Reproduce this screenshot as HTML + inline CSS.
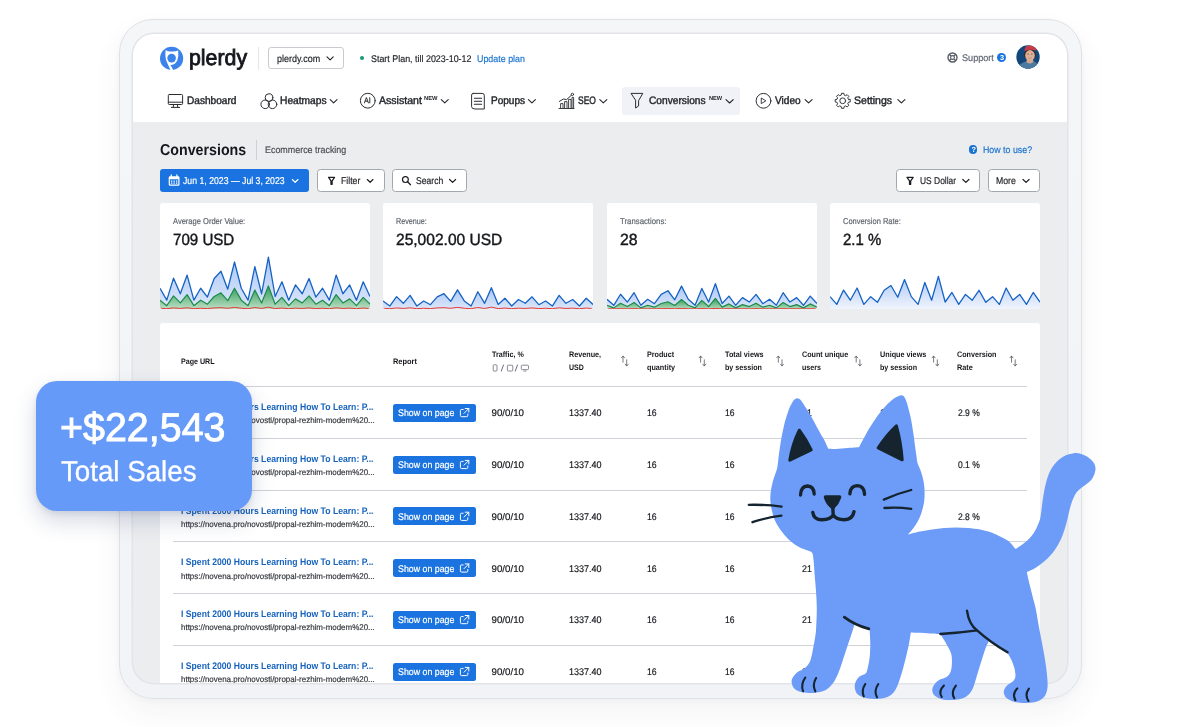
<!DOCTYPE html>
<html lang="en">
<head>
<meta charset="utf-8">
<title>Plerdy Conversions</title>
<style>
*{box-sizing:border-box;margin:0;padding:0}
html,body{width:1200px;height:727px;overflow:hidden;background:#fff}
body{position:relative;font-family:"Liberation Sans",sans-serif;color:#1b1d21;-webkit-font-smoothing:antialiased;text-rendering:geometricPrecision}
#root{position:absolute;left:0;top:0;width:1200px;height:727px;overflow:hidden;background:#fff;will-change:transform}
.abs{position:absolute;white-space:nowrap}
#frame{position:absolute;left:119px;top:19px;width:963px;height:680px;border-radius:34px;background:linear-gradient(#f5f6f8,#f2f3f6);border:1px solid #dee1e5;box-shadow:0 14px 30px rgba(60,70,90,.06),0 2px 6px rgba(60,70,90,.04)}
#screen{position:absolute;left:133px;top:34px;width:934px;height:649px;border-radius:21px;background:#ebedef;overflow:hidden;box-shadow:0 0 0 1.5px #e2e4e8}
#pg{position:absolute;left:-133px;top:-34px;width:1200px;height:727px}
#hdr{position:absolute;left:133px;top:34px;width:934px;height:87.5px;background:#fff}
.t{position:absolute;white-space:nowrap;line-height:1;transform-origin:0 50%}
.card{position:absolute;top:203px;width:210px;height:106px;background:#fff;border-radius:3px;overflow:hidden}
.card svg{position:absolute;left:0;top:0}
#tbl{position:absolute;left:160px;top:323px;width:880px;height:380px;background:#fff;border-radius:3px}
.sep{position:absolute;left:173px;width:854px;height:1px;background:#cfd2d6}
#sales{position:absolute;left:36px;top:381px;width:216px;height:130px;border-radius:21px;background:#669af9;box-shadow:0 10px 22px rgba(40,60,110,.2),0 2px 5px rgba(40,60,110,.1);color:#fff}
</style>
</head>
<body>
<div id="root">
<div id="frame"></div>
<div id="screen"><div id="pg">
<div id="hdr"></div>
<svg class="abs" style="left:158px;top:45px" width="27" height="27" viewBox="158 45 27 27">
<circle cx="171.6" cy="58.4" r="11.6" fill="#3b82ea"/>
<path d="M165.7 49.9 Q168.2 52 171.7 51.5 Q175.4 51.7 178.2 50.4 Q178.9 56 177.3 60.6 Q175.2 64.8 171.4 64.9 Q170.8 64.9 170.3 64.7 L173.4 70.2 L170.5 70.2 L166.7 61.8 Q164.6 56.4 165.7 49.9 Z" fill="#fff"/>
<circle cx="171.6" cy="58.1" r="4.3" fill="#3b82ea"/>
</svg>
<span class="t" style="left:189.10px;top:47px;font-size:22.2px;color:#15171c;transform:scaleX(0.9609);-webkit-text-stroke:.85px #15171c;">plerdy</span>
<div class="abs" style="left:258px;top:47px;width:1px;height:22.5px;background:#e4e6e9"></div>
<div class="abs" style="left:268.3px;top:47.2px;width:76.2px;height:22.2px;border:1px solid #c8ccd1;border-radius:3px;background:#fff"></div>
<span class="t" style="left:276.80px;top:55px;font-size:9.9px;color:#1d1f23;transform:scaleX(0.9060);-webkit-text-stroke:.18px #1d1f23;">plerdy.com</span>
<svg class="abs" style="left:0;top:0" width="1200" height="727"><path d="M327.00 56.93 L330.10 59.87 L333.20 56.93" fill="none" stroke="#1d1f23" stroke-width="1.1" stroke-linecap="round" stroke-linejoin="round"/></svg>
<div class="abs" style="left:360.3px;top:56.4px;width:3.8px;height:3.8px;border-radius:50%;background:#189b78"></div>
<span class="t" style="left:370.60px;top:55px;font-size:9.7px;color:#1d1f23;transform:scaleX(0.9191);-webkit-text-stroke:.18px #1d1f23;">Start Plan, till 2023-10-12</span>
<span class="t" style="left:477.30px;top:55px;font-size:9.7px;color:#1a73d0;transform:scaleX(0.9176);-webkit-text-stroke:.18px #1a73d0;">Update plan</span>
<svg class="abs" style="left:946px;top:51px" width="13" height="13" viewBox="-6.5 -6.5 13 13">
<circle r="4.5" fill="none" stroke="#555a63" stroke-width="1.4"/><circle r="1.9" fill="none" stroke="#555a63" stroke-width="1.1"/>
<path d="M-3.3 -3.3 L-1.4 -1.4 M3.3 -3.3 L1.4 -1.4 M-3.3 3.3 L-1.4 1.4 M3.3 3.3 L1.4 1.4" stroke="#555a63" stroke-width="1.4"/></svg>
<span class="t" style="left:961.70px;top:54px;font-size:9.7px;color:#5f6570;transform:scaleX(0.9390);-webkit-text-stroke:.18px #5f6570;">Support</span>
<div class="abs" style="left:996.9px;top:52.7px;width:9.6px;height:9.6px;border-radius:50%;background:#1a73e0"></div>
<span class="t" style="left:999.90px;top:54px;font-size:7.3px;color:#fff;font-weight:bold;">3</span>
<svg class="abs" style="left:1016.3px;top:45.4px" width="24" height="24" viewBox="-12 -12 24 24">
<defs><clipPath id="av"><circle r="11.7"/></clipPath></defs>
<g clip-path="url(#av)"><rect x="-12" y="-12" width="24" height="24" fill="#134679"/>
<path d="M-11 12 Q-9 6.2 -2.4 4.4 L6 4.2 Q10.4 6 11.4 12 Z" fill="#4a7a9f"/>
<path d="M-0.8 0.6 L-1.6 5 Q2 8.2 5.4 5 L4.8 0.6 Z" fill="#d2a58b"/>
<ellipse cx="1.9" cy="-2.4" rx="5.9" ry="5.6" fill="#3b2a23"/>
<ellipse cx="2" cy="-1.6" rx="4.8" ry="5.3" fill="#dbb097"/>
<path d="M-3.6 -5.8 Q-3.4 -12 2.6 -12 Q8.2 -12 8.6 -6.2 Q2.6 -8.4 -3.6 -5.8 Z" fill="#c93c47"/>
<ellipse cx="0.1" cy="-3" rx=".8" ry=".5" fill="#6a4a3c"/><ellipse cx="3.8" cy="-3" rx=".8" ry=".5" fill="#6a4a3c"/>
<path d="M0.2 0.8 Q2 2 3.8 0.8" stroke="#b07d68" stroke-width=".6" fill="none"/>
</g></svg>
<div class="abs" style="left:622.2px;top:87px;width:117.8px;height:27.6px;border-radius:3px;background:#f0f2f7"></div>
<svg class="abs" style="left:0;top:0" width="1200" height="727" fill="none" stroke="#2b2d33" stroke-width="1" stroke-linecap="round" stroke-linejoin="round"><rect x="168.3" y="94.5" width="14.3" height="10" rx="1"/><path d="M168.3 102.2 H182.6 M173.6 104.6 L173.2 107.3 M177.4 104.6 L177.8 107.3 M171.4 107.4 H179.6"/></svg>
<span class="t" style="left:186.80px;top:96px;font-size:10.9px;color:#24262b;transform:scaleX(0.9283);-webkit-text-stroke:.42px #24262b;">Dashboard</span>
<svg class="abs" style="left:0;top:0" width="1200" height="727" fill="none" stroke="#2b2d33" stroke-width="1" stroke-linecap="round" stroke-linejoin="round"><circle cx="269" cy="97.6" r="3.85"/><circle cx="265.2" cy="104.3" r="4.3"/><circle cx="272.5" cy="104.3" r="4.3"/></svg>
<span class="t" style="left:279.60px;top:96px;font-size:10.9px;color:#24262b;transform:scaleX(0.9380);-webkit-text-stroke:.42px #24262b;">Heatmaps</span>
<svg class="abs" style="left:0;top:0" width="1200" height="727"><path d="M330.20 99.68 L333.60 102.92 L337.00 99.68" fill="none" stroke="#24262b" stroke-width="1.1" stroke-linecap="round" stroke-linejoin="round"/></svg>
<svg class="abs" style="left:0;top:0" width="1200" height="727" fill="none" stroke="#2b2d33" stroke-width="1" stroke-linecap="round" stroke-linejoin="round"><circle cx="367.8" cy="100.7" r="7.4"/></svg>
<span class="t" style="left:364.40px;top:97px;font-size:8.0px;color:#24262b;transform:scaleX(0.8996);-webkit-text-stroke:.25px #24262b;">AI</span>
<span class="t" style="left:379.30px;top:96px;font-size:10.9px;color:#24262b;transform:scaleX(0.9701);-webkit-text-stroke:.42px #24262b;">Assistant</span>
<span class="t" style="left:424.30px;top:97px;font-size:5.8px;color:#24262b;transform:scaleX(0.9977);font-weight:bold;">NEW</span>
<svg class="abs" style="left:0;top:0" width="1200" height="727"><path d="M441.30 99.66 L444.75 102.94 L448.20 99.66" fill="none" stroke="#24262b" stroke-width="1.1" stroke-linecap="round" stroke-linejoin="round"/></svg>
<svg class="abs" style="left:0;top:0" width="1200" height="727" fill="none" stroke="#2b2d33" stroke-width="1" stroke-linecap="round" stroke-linejoin="round"><path d="M473.2 93.4 H482.2 Q484.3 93.4 484.3 95.4 V109 H475 Q471.6 109 471.6 106.6 V95 Q471.6 93.4 473.2 93.4 Z"/><path d="M474.4 98.2 H481.6 M474.4 101.2 H481.6 M474.4 104.2 H481.6" stroke-width="1.1"/></svg>
<span class="t" style="left:490.60px;top:96px;font-size:10.9px;color:#24262b;transform:scaleX(0.9224);-webkit-text-stroke:.42px #24262b;">Popups</span>
<svg class="abs" style="left:0;top:0" width="1200" height="727"><path d="M528.40 99.64 L531.90 102.96 L535.40 99.64" fill="none" stroke="#24262b" stroke-width="1.1" stroke-linecap="round" stroke-linejoin="round"/></svg>
<svg class="abs" style="left:0;top:0" width="1200" height="727" fill="none" stroke="#2b2d33" stroke-width="1" stroke-linecap="round" stroke-linejoin="round"><path d="M559 108.5 H574 M560.6 108.3 V103.6 H563 V108.3 M564.6 108.3 V101.6 H567 V108.3 M568.6 108.3 V99.4 H571 V108.3 M572 108.3 V97.4 H573.6 V108.3" stroke-width=".9"/><path d="M559.4 101.4 L563.4 99 L566.6 99.6 L571.4 95.2" stroke-width="1"/><circle cx="572.4" cy="94.4" r="1.2" stroke-width=".9"/></svg>
<span class="t" style="left:577.90px;top:96px;font-size:10.9px;color:#24262b;transform:scaleX(0.7776);-webkit-text-stroke:.42px #24262b;">SEO</span>
<svg class="abs" style="left:0;top:0" width="1200" height="727"><path d="M599.80 99.64 L603.30 102.96 L606.80 99.64" fill="none" stroke="#24262b" stroke-width="1.1" stroke-linecap="round" stroke-linejoin="round"/></svg>
<svg class="abs" style="left:0;top:0" width="1200" height="727" fill="none" stroke="#2b2d33" stroke-width="1" stroke-linecap="round" stroke-linejoin="round"><path d="M631.4 93.4 H642.8 L638.6 100.6 V106 L635.6 108 V100.6 Z"/></svg>
<span class="t" style="left:648.90px;top:96px;font-size:10.9px;color:#24262b;transform:scaleX(0.9342);-webkit-text-stroke:.42px #24262b;">Conversions</span>
<span class="t" style="left:708.80px;top:97px;font-size:5.8px;color:#24262b;transform:scaleX(0.9755);font-weight:bold;">NEW</span>
<svg class="abs" style="left:0;top:0" width="1200" height="727"><path d="M726.00 99.59 L729.60 103.01 L733.20 99.59" fill="none" stroke="#24262b" stroke-width="1.1" stroke-linecap="round" stroke-linejoin="round"/></svg>
<svg class="abs" style="left:0;top:0" width="1200" height="727" fill="none" stroke="#2b2d33" stroke-width="1" stroke-linecap="round" stroke-linejoin="round"><circle cx="763.5" cy="100.8" r="7.4"/><path d="M761.6 98.2 L765.8 100.8 L761.6 103.4 Z" stroke-width=".9"/></svg>
<span class="t" style="left:775.10px;top:96px;font-size:10.9px;color:#24262b;transform:scaleX(0.9284);-webkit-text-stroke:.42px #24262b;">Video</span>
<svg class="abs" style="left:0;top:0" width="1200" height="727"><path d="M805.10 99.64 L808.60 102.96 L812.10 99.64" fill="none" stroke="#24262b" stroke-width="1.1" stroke-linecap="round" stroke-linejoin="round"/></svg>
<svg class="abs" style="left:0;top:0" width="1200" height="727" fill="none" stroke="#2b2d33" stroke-width="1" stroke-linecap="round" stroke-linejoin="round"><path d="M850.21 99.61 L850.21 101.99 L848.41 102.27 L847.78 103.80 L848.85 105.27 L847.17 106.95 L845.70 105.88 L844.17 106.51 L843.89 108.31 L841.51 108.31 L841.23 106.51 L839.70 105.88 L838.23 106.95 L836.55 105.27 L837.62 103.80 L836.99 102.27 L835.19 101.99 L835.19 99.61 L836.99 99.33 L837.62 97.80 L836.55 96.33 L838.23 94.65 L839.70 95.72 L841.23 95.09 L841.51 93.29 L843.89 93.29 L844.17 95.09 L845.70 95.72 L847.17 94.65 L848.85 96.33 L847.78 97.80 L848.41 99.33 Z" stroke-width=".95"/><circle cx="842.7" cy="100.8" r="2.9" stroke-width=".95"/></svg>
<span class="t" style="left:853.90px;top:96px;font-size:10.9px;color:#24262b;transform:scaleX(0.9674);-webkit-text-stroke:.42px #24262b;">Settings</span>
<svg class="abs" style="left:0;top:0" width="1200" height="727"><path d="M897.90 99.64 L901.40 102.96 L904.90 99.64" fill="none" stroke="#24262b" stroke-width="1.1" stroke-linecap="round" stroke-linejoin="round"/></svg>
<span class="t" style="left:160.40px;top:143px;font-size:15.7px;color:#15171c;transform:scaleX(0.9075);font-weight:bold;">Conversions</span>
<div class="abs" style="left:255.5px;top:139.7px;width:1px;height:20px;background:#cdd0d4"></div>
<span class="t" style="left:264.50px;top:146px;font-size:9.6px;color:#4a4e55;transform:scaleX(0.9292);-webkit-text-stroke:.18px #4a4e55;">Ecommerce tracking</span>
<div class="abs" style="left:969.1px;top:145.3px;width:8.4px;height:8.4px;border-radius:50%;background:#1a73d0"></div>
<span class="t" style="left:971.50px;top:146px;font-size:7.3px;color:#fff;font-weight:bold;">?</span>
<span class="t" style="left:982.90px;top:146px;font-size:9.6px;color:#1a73d0;transform:scaleX(0.9201);-webkit-text-stroke:.18px #1a73d0;">How to use?</span>
<div class="abs" style="left:160px;top:168.8px;width:149.2px;height:23.2px;border-radius:3px;background:#1a73e0"></div>
<svg class="abs" style="left:0;top:0" width="1200" height="727"><path d="M170 176.2 H178.2 Q179.5 176.2 179.5 177.5 V184.5 Q179.5 185.8 178.2 185.8 H170 Q168.7 185.8 168.7 184.5 V177.5 Q168.7 176.2 170 176.2 Z M169.9 179.2 V184.1 Q169.9 184.6 170.4 184.6 H177.8 Q178.3 184.6 178.3 184.1 V179.2 Z" fill="#fff" fill-rule="evenodd"/><path d="M171.3 175 V177 M176.9 175 V177" stroke="#fff" stroke-width="1.3" stroke-linecap="round"/><path d="M171 180.6 h1.3 v1.1 h-1.3z M173.5 180.6 h1.3 v1.1 h-1.3z M176 180.6 h1.3 v1.1 h-1.3z M171 182.6 h1.3 v1.1 h-1.3z M173.5 182.6 h1.3 v1.1 h-1.3z M176 182.6 h1.3 v1.1 h-1.3z" fill="#fff"/></svg>
<span class="t" style="left:183.40px;top:177px;font-size:9.9px;color:#fff;transform:scaleX(0.8816);-webkit-text-stroke:.18px #fff;">Jun 1, 2023 — Jul 3, 2023</span>
<svg class="abs" style="left:0;top:0" width="1200" height="727"><path d="M292.30 179.55 L295.15 182.25 L298.00 179.55" fill="none" stroke="#fff" stroke-width="1.2" stroke-linecap="round" stroke-linejoin="round"/></svg>
<div class="abs" style="left:317.2px;top:168.8px;width:67.5px;height:23.2px;border-radius:3.5px;background:#fff;border:1px solid #a3a8ae"></div>
<svg class="abs" style="left:0;top:0" width="1200" height="727"><path d="M328.60 177.30 H334.50 L332.15 180.90 V184.30 H330.95 V180.90 Z" fill="none" stroke="#1d1f23" stroke-width="1.25" stroke-linejoin="round"/></svg>
<span class="t" style="left:340.90px;top:177px;font-size:9.9px;color:#1d1f23;transform:scaleX(0.8818);-webkit-text-stroke:.18px #1d1f23;">Filter</span>
<svg class="abs" style="left:0;top:0" width="1200" height="727"><path d="M367.30 179.55 L370.15 182.25 L373.00 179.55" fill="none" stroke="#1d1f23" stroke-width="1.2" stroke-linecap="round" stroke-linejoin="round"/></svg>
<div class="abs" style="left:392.2px;top:168.8px;width:74.5px;height:23.2px;border-radius:3.5px;background:#fff;border:1px solid #a3a8ae"></div>
<svg class="abs" style="left:0;top:0" width="1200" height="727"><circle cx="405.4" cy="179.6" r="2.9" fill="none" stroke="#1d1f23" stroke-width="1.2"/><path d="M407.6 181.8 L410.5 184.7" stroke="#1d1f23" stroke-width="1.3" stroke-linecap="round"/></svg>
<span class="t" style="left:415.90px;top:177px;font-size:9.9px;color:#1d1f23;transform:scaleX(0.8735);-webkit-text-stroke:.18px #1d1f23;">Search</span>
<svg class="abs" style="left:0;top:0" width="1200" height="727"><path d="M449.60 179.47 L452.60 182.33 L455.60 179.47" fill="none" stroke="#1d1f23" stroke-width="1.2" stroke-linecap="round" stroke-linejoin="round"/></svg>
<div class="abs" style="left:896.2px;top:168.8px;width:83.5px;height:23.2px;border-radius:3.5px;background:#fff;border:1px solid #a3a8ae"></div>
<svg class="abs" style="left:0;top:0" width="1200" height="727"><path d="M907.00 177.30 H913.20 L910.70 180.90 V184.30 H909.50 V180.90 Z" fill="none" stroke="#1d1f23" stroke-width="1.25" stroke-linejoin="round"/></svg>
<span class="t" style="left:919.60px;top:177px;font-size:9.9px;color:#1d1f23;transform:scaleX(0.8546);-webkit-text-stroke:.18px #1d1f23;">US Dollar</span>
<svg class="abs" style="left:0;top:0" width="1200" height="727"><path d="M962.80 179.45 L965.85 182.35 L968.90 179.45" fill="none" stroke="#1d1f23" stroke-width="1.2" stroke-linecap="round" stroke-linejoin="round"/></svg>
<div class="abs" style="left:987.5px;top:168.8px;width:52.2px;height:23.2px;border-radius:3.5px;background:#fff;border:1px solid #a3a8ae"></div>
<span class="t" style="left:995.90px;top:177px;font-size:9.9px;color:#1d1f23;transform:scaleX(0.8823);-webkit-text-stroke:.18px #1d1f23;">More</span>
<svg class="abs" style="left:0;top:0" width="1200" height="727"><path d="M1023.00 179.45 L1026.05 182.35 L1029.10 179.45" fill="none" stroke="#1d1f23" stroke-width="1.2" stroke-linecap="round" stroke-linejoin="round"/></svg>
<div class="card" style="left:160px"><svg width="210" height="107" viewBox="0 0 210 107"><defs><linearGradient id="gb1" x1="0" y1="0" x2="0" y2="1"><stop offset="0" stop-color="#a9c6f5"/><stop offset="1" stop-color="#dfe9fa"/></linearGradient><linearGradient id="gg1" x1="0" y1="0" x2="0" y2="1"><stop offset="0" stop-color="#2f9a55"/><stop offset="1" stop-color="#c4e3cd"/></linearGradient></defs><path d="M0.00 85.25 L6.77 97.17 L13.55 75.17 L20.32 90.75 L27.10 72.05 L33.87 97.17 L40.65 85.25 L47.42 94.05 L54.19 75.53 L60.97 68.20 L67.74 86.17 L74.52 59.03 L81.29 85.25 L88.06 97.17 L94.84 63.62 L101.61 90.75 L108.39 54.08 L115.16 93.50 L121.94 78.83 L128.71 97.17 L135.48 81.95 L142.26 90.75 L149.03 75.53 L155.81 94.05 L162.58 85.25 L169.35 97.17 L176.13 72.05 L182.90 90.75 L189.68 81.95 L196.45 97.17 L203.23 78.83 L210.00 93.50 L210 107.5 L0 107.5 Z" fill="url(#gb1)"/><path d="M0.00 97.17 L6.77 102.67 L13.55 92.95 L20.32 99.92 L27.10 91.67 L33.87 102.67 L40.65 97.17 L47.42 101.20 L54.19 93.50 L60.97 89.83 L67.74 97.72 L74.52 85.25 L81.29 97.17 L88.06 102.67 L94.84 87.08 L101.61 99.92 L108.39 82.87 L115.16 101.20 L121.94 94.42 L128.71 102.67 L135.48 95.88 L142.26 99.92 L149.03 92.95 L155.81 101.20 L162.58 97.17 L169.35 102.67 L176.13 91.67 L182.90 99.92 L189.68 95.88 L196.45 102.67 L203.23 94.42 L210.00 101.20 L210 107.5 L0 107.5 Z" fill="url(#gg1)"/><path d="M0.00 85.25 L6.77 97.17 L13.55 75.17 L20.32 90.75 L27.10 72.05 L33.87 97.17 L40.65 85.25 L47.42 94.05 L54.19 75.53 L60.97 68.20 L67.74 86.17 L74.52 59.03 L81.29 85.25 L88.06 97.17 L94.84 63.62 L101.61 90.75 L108.39 54.08 L115.16 93.50 L121.94 78.83 L128.71 97.17 L135.48 81.95 L142.26 90.75 L149.03 75.53 L155.81 94.05 L162.58 85.25 L169.35 97.17 L176.13 72.05 L182.90 90.75 L189.68 81.95 L196.45 97.17 L203.23 78.83 L210.00 93.50" fill="none" stroke="#1662c4" stroke-width="1.3" stroke-linejoin="round"/><path d="M0.00 97.17 L6.77 102.67 L13.55 92.95 L20.32 99.92 L27.10 91.67 L33.87 102.67 L40.65 97.17 L47.42 101.20 L54.19 93.50 L60.97 89.83 L67.74 97.72 L74.52 85.25 L81.29 97.17 L88.06 102.67 L94.84 87.08 L101.61 99.92 L108.39 82.87 L115.16 101.20 L121.94 94.42 L128.71 102.67 L135.48 95.88 L142.26 99.92 L149.03 92.95 L155.81 101.20 L162.58 97.17 L169.35 102.67 L176.13 91.67 L182.90 99.92 L189.68 95.88 L196.45 102.67 L203.23 94.42 L210.00 101.20" fill="none" stroke="#1c8a4c" stroke-width="1.2" stroke-linejoin="round"/><path d="M0.00 105.26 L6.77 105.68 L13.55 104.91 L20.32 105.45 L27.10 104.80 L33.87 105.68 L40.65 105.26 L47.42 105.57 L54.19 104.92 L60.97 104.66 L67.74 105.29 L74.52 104.34 L81.29 105.26 L88.06 105.68 L94.84 104.50 L101.61 105.45 L108.39 104.17 L115.16 105.55 L121.94 105.04 L128.71 105.68 L135.48 105.15 L142.26 105.45 L149.03 104.92 L155.81 105.57 L162.58 105.26 L169.35 105.68 L176.13 104.80 L182.90 105.45 L189.68 105.15 L196.45 105.68 L203.23 105.04 L210.00 105.55" fill="none" stroke="#e53a36" stroke-width="1" stroke-linejoin="round"/></svg><span class="t" style="left:13.00px;top:14px;font-size:8.5px;color:#5d636c;transform:scaleX(0.8867);-webkit-text-stroke:.18px #5d636c;">Average Order Value:</span><span class="t" style="left:13.00px;top:29px;font-size:16.2px;color:#15171a;transform:scaleX(0.9325);-webkit-text-stroke:.4px #15171a;">709 USD</span></div>
<div class="card" style="left:383.3px"><svg width="210" height="107" viewBox="0 0 210 107"><defs><linearGradient id="gb2" x1="0" y1="0" x2="0" y2="1"><stop offset="0" stop-color="#a9c6f5"/><stop offset="1" stop-color="#dfe9fa"/></linearGradient><linearGradient id="gg2" x1="0" y1="0" x2="0" y2="1"><stop offset="0" stop-color="#2f9a55"/><stop offset="1" stop-color="#c4e3cd"/></linearGradient></defs><path d="M0.00 97.95 L6.77 103.03 L13.55 93.66 L20.32 100.30 L27.10 92.34 L33.87 103.03 L40.65 97.95 L47.42 101.70 L54.19 93.82 L60.97 90.70 L67.74 98.34 L74.52 86.80 L81.29 97.95 L88.06 103.03 L94.84 88.75 L101.61 100.30 L108.39 84.69 L115.16 101.47 L121.94 95.22 L128.71 103.03 L135.48 96.55 L142.26 100.30 L149.03 93.82 L155.81 101.70 L162.58 97.95 L169.35 103.03 L176.13 92.34 L182.90 100.30 L189.68 96.55 L196.45 103.03 L203.23 95.22 L210.00 101.47 L210 107.5 L0 107.5 Z" fill="url(#gb2)"/><path d="M0.00 97.95 L6.77 103.03 L13.55 93.66 L20.32 100.30 L27.10 92.34 L33.87 103.03 L40.65 97.95 L47.42 101.70 L54.19 93.82 L60.97 90.70 L67.74 98.34 L74.52 86.80 L81.29 97.95 L88.06 103.03 L94.84 88.75 L101.61 100.30 L108.39 84.69 L115.16 101.47 L121.94 95.22 L128.71 103.03 L135.48 96.55 L142.26 100.30 L149.03 93.82 L155.81 101.70 L162.58 97.95 L169.35 103.03 L176.13 92.34 L182.90 100.30 L189.68 96.55 L196.45 103.03 L203.23 95.22 L210.00 101.47" fill="none" stroke="#1662c4" stroke-width="1.3" stroke-linejoin="round"/><path d="M0.00 105.26 L6.77 105.68 L13.55 104.91 L20.32 105.45 L27.10 104.80 L33.87 105.68 L40.65 105.26 L47.42 105.57 L54.19 104.92 L60.97 104.66 L67.74 105.29 L74.52 104.34 L81.29 105.26 L88.06 105.68 L94.84 104.50 L101.61 105.45 L108.39 104.17 L115.16 105.55 L121.94 105.04 L128.71 105.68 L135.48 105.15 L142.26 105.45 L149.03 104.92 L155.81 105.57 L162.58 105.26 L169.35 105.68 L176.13 104.80 L182.90 105.45 L189.68 105.15 L196.45 105.68 L203.23 105.04 L210.00 105.55" fill="none" stroke="#e53a36" stroke-width="1" stroke-linejoin="round"/></svg><span class="t" style="left:13.00px;top:14px;font-size:8.5px;color:#5d636c;transform:scaleX(0.8465);-webkit-text-stroke:.18px #5d636c;">Revenue:</span><span class="t" style="left:13.00px;top:29px;font-size:16.2px;color:#15171a;transform:scaleX(0.9605);-webkit-text-stroke:.4px #15171a;">25,002.00 USD</span></div>
<div class="card" style="left:606.6px"><svg width="210" height="107" viewBox="0 0 210 107"><defs><linearGradient id="gb3" x1="0" y1="0" x2="0" y2="1"><stop offset="0" stop-color="#a9c6f5"/><stop offset="1" stop-color="#dfe9fa"/></linearGradient><linearGradient id="gg3" x1="0" y1="0" x2="0" y2="1"><stop offset="0" stop-color="#2f9a55"/><stop offset="1" stop-color="#c4e3cd"/></linearGradient></defs><path d="M0.00 96.32 L6.77 102.30 L13.55 91.26 L20.32 99.08 L27.10 89.69 L33.87 102.30 L40.65 96.32 L47.42 100.74 L54.19 91.44 L60.97 87.76 L67.74 96.78 L74.52 83.16 L81.29 96.32 L88.06 102.30 L94.84 85.46 L101.61 99.08 L108.39 80.67 L115.16 100.46 L121.94 93.10 L128.71 102.30 L135.48 94.66 L142.26 99.08 L149.03 91.44 L155.81 100.74 L162.58 96.32 L169.35 102.30 L176.13 89.69 L182.90 99.08 L189.68 94.66 L196.45 102.30 L203.23 93.10 L210.00 100.46 L210 107.5 L0 107.5 Z" fill="url(#gb3)"/><path d="M0.00 102.23 L6.77 104.87 L13.55 100.20 L20.32 103.55 L27.10 99.59 L33.87 104.87 L40.65 102.23 L47.42 104.16 L54.19 100.47 L60.97 98.71 L67.74 102.49 L74.52 96.51 L81.29 102.23 L88.06 104.87 L94.84 97.39 L101.61 103.55 L108.39 95.36 L115.16 104.16 L121.94 100.91 L128.71 104.87 L135.48 101.61 L142.26 103.55 L149.03 100.20 L155.81 104.16 L162.58 102.23 L169.35 104.87 L176.13 99.59 L182.90 103.55 L189.68 101.61 L196.45 104.87 L203.23 100.91 L210.00 104.16 L210 107.5 L0 107.5 Z" fill="url(#gg3)"/><path d="M0.00 96.32 L6.77 102.30 L13.55 91.26 L20.32 99.08 L27.10 89.69 L33.87 102.30 L40.65 96.32 L47.42 100.74 L54.19 91.44 L60.97 87.76 L67.74 96.78 L74.52 83.16 L81.29 96.32 L88.06 102.30 L94.84 85.46 L101.61 99.08 L108.39 80.67 L115.16 100.46 L121.94 93.10 L128.71 102.30 L135.48 94.66 L142.26 99.08 L149.03 91.44 L155.81 100.74 L162.58 96.32 L169.35 102.30 L176.13 89.69 L182.90 99.08 L189.68 94.66 L196.45 102.30 L203.23 93.10 L210.00 100.46" fill="none" stroke="#1662c4" stroke-width="1.3" stroke-linejoin="round"/><path d="M0.00 102.23 L6.77 104.87 L13.55 100.20 L20.32 103.55 L27.10 99.59 L33.87 104.87 L40.65 102.23 L47.42 104.16 L54.19 100.47 L60.97 98.71 L67.74 102.49 L74.52 96.51 L81.29 102.23 L88.06 104.87 L94.84 97.39 L101.61 103.55 L108.39 95.36 L115.16 104.16 L121.94 100.91 L128.71 104.87 L135.48 101.61 L142.26 103.55 L149.03 100.20 L155.81 104.16 L162.58 102.23 L169.35 104.87 L176.13 99.59 L182.90 103.55 L189.68 101.61 L196.45 104.87 L203.23 100.91 L210.00 104.16" fill="none" stroke="#1c8a4c" stroke-width="1.2" stroke-linejoin="round"/><path d="M0.00 105.77 L6.77 105.89 L13.55 105.67 L20.32 105.82 L27.10 105.63 L33.87 105.89 L40.65 105.77 L47.42 105.85 L54.19 105.67 L60.97 105.60 L67.74 105.78 L74.52 105.50 L81.29 105.77 L88.06 105.89 L94.84 105.55 L101.61 105.82 L108.39 105.45 L115.16 105.85 L121.94 105.70 L128.71 105.89 L135.48 105.73 L142.26 105.82 L149.03 105.67 L155.81 105.85 L162.58 105.77 L169.35 105.89 L176.13 105.63 L182.90 105.82 L189.68 105.73 L196.45 105.89 L203.23 105.70 L210.00 105.85" fill="none" stroke="#e53a36" stroke-width="1" stroke-linejoin="round"/></svg><span class="t" style="left:13.00px;top:14px;font-size:8.5px;color:#5d636c;transform:scaleX(0.9171);-webkit-text-stroke:.18px #5d636c;">Transactions:</span><span class="t" style="left:13.00px;top:29px;font-size:16.2px;color:#15171a;transform:scaleX(0.9767);-webkit-text-stroke:.4px #15171a;">28</span></div>
<div class="card" style="left:829.8px"><svg width="210" height="107" viewBox="0 0 210 107"><defs><linearGradient id="gb4" x1="0" y1="0" x2="0" y2="1"><stop offset="0" stop-color="#a9c6f5"/><stop offset="1" stop-color="#f4f7fd"/></linearGradient><linearGradient id="gg4" x1="0" y1="0" x2="0" y2="1"><stop offset="0" stop-color="#2f9a55"/><stop offset="1" stop-color="#c4e3cd"/></linearGradient></defs><path d="M0.00 93.63 L6.77 101.39 L13.55 87.06 L20.32 97.21 L27.10 85.03 L33.87 101.39 L40.65 93.63 L47.42 99.36 L54.19 87.30 L60.97 82.53 L67.74 94.22 L74.52 76.56 L81.29 93.63 L88.06 101.39 L94.84 79.54 L101.61 97.21 L108.39 73.34 L115.16 99.00 L121.94 89.45 L128.71 101.39 L135.48 91.48 L142.26 97.21 L149.03 87.30 L155.81 99.36 L162.58 93.63 L169.35 101.39 L176.13 85.03 L182.90 97.21 L189.68 91.48 L196.45 101.39 L203.23 89.45 L210.00 99.00 L210 107.5 L0 107.5 Z" fill="url(#gb4)"/><path d="M0.00 93.63 L6.77 101.39 L13.55 87.06 L20.32 97.21 L27.10 85.03 L33.87 101.39 L40.65 93.63 L47.42 99.36 L54.19 87.30 L60.97 82.53 L67.74 94.22 L74.52 76.56 L81.29 93.63 L88.06 101.39 L94.84 79.54 L101.61 97.21 L108.39 73.34 L115.16 99.00 L121.94 89.45 L128.71 101.39 L135.48 91.48 L142.26 97.21 L149.03 87.30 L155.81 99.36 L162.58 93.63 L169.35 101.39 L176.13 85.03 L182.90 97.21 L189.68 91.48 L196.45 101.39 L203.23 89.45 L210.00 99.00" fill="none" stroke="#1662c4" stroke-width="1.3" stroke-linejoin="round"/></svg><span class="t" style="left:13.00px;top:14px;font-size:8.5px;color:#5d636c;transform:scaleX(0.8801);-webkit-text-stroke:.18px #5d636c;">Conversion Rate:</span><span class="t" style="left:13.00px;top:29px;font-size:16.2px;color:#15171a;transform:scaleX(0.9221);-webkit-text-stroke:.4px #15171a;">2.1 %</span></div>
<div id="tbl"></div>
<span class="t" style="left:180.60px;top:358px;font-size:8.0px;color:#15171b;transform:scaleX(0.8892);font-weight:bold;">Page URL</span>
<span class="t" style="left:392.90px;top:358px;font-size:8.0px;color:#15171b;transform:scaleX(0.9272);font-weight:bold;">Report</span>
<span class="t" style="left:491.50px;top:351px;font-size:8.0px;color:#15171b;transform:scaleX(0.8941);font-weight:bold;">Traffic, %</span>
<svg class="abs" style="left:0;top:0" width="1200" height="727" fill="none" stroke="#686d75" stroke-width=".8"><rect x="493.2" y="364.8" width="3.8" height="6.3" rx=".9"/><path d="M503.6 364.6 L501.2 371.4 M517.6 364.6 L515.2 371.4" stroke="#44484f"/><rect x="507.4" y="365.2" width="5.4" height="5.8" rx=".9"/><rect x="521.3" y="365.2" width="7.2" height="4.4" rx=".9"/><path d="M523.4 371 H526.4"/></svg>
<span class="t" style="left:568.90px;top:351px;font-size:8.0px;color:#15171b;transform:scaleX(0.9024);font-weight:bold;">Revenue,</span>
<span class="t" style="left:568.90px;top:364px;font-size:8.0px;color:#15171b;transform:scaleX(0.8703);font-weight:bold;">USD</span>
<svg class="abs" style="left:0;top:0" width="1200" height="727" fill="none" stroke="#5f646c" stroke-width=".85" stroke-linecap="round" stroke-linejoin="round"><path d="M623.0 362.2 V356.2 M621.5 357.8 L623.0 356 L624.5 357.8 M626.7 359.8 V365.8 M625.2 364.2 L626.7 366 L628.2 364.2"/></svg>
<span class="t" style="left:646.90px;top:351px;font-size:8.0px;color:#15171b;transform:scaleX(0.8967);font-weight:bold;">Product</span>
<span class="t" style="left:646.90px;top:364px;font-size:8.0px;color:#15171b;transform:scaleX(0.9033);font-weight:bold;">quantity</span>
<svg class="abs" style="left:0;top:0" width="1200" height="727" fill="none" stroke="#5f646c" stroke-width=".85" stroke-linecap="round" stroke-linejoin="round"><path d="M700.6 362.2 V356.2 M699.1 357.8 L700.6 356 L702.1 357.8 M704.3 359.8 V365.8 M702.8 364.2 L704.3 366 L705.8 364.2"/></svg>
<span class="t" style="left:724.70px;top:351px;font-size:8.0px;color:#15171b;transform:scaleX(0.9076);font-weight:bold;">Total views</span>
<span class="t" style="left:724.70px;top:364px;font-size:8.0px;color:#15171b;transform:scaleX(0.8923);font-weight:bold;">by session</span>
<svg class="abs" style="left:0;top:0" width="1200" height="727" fill="none" stroke="#5f646c" stroke-width=".85" stroke-linecap="round" stroke-linejoin="round"><path d="M778.3 362.2 V356.2 M776.8 357.8 L778.3 356 L779.8 357.8 M782.0 359.8 V365.8 M780.5 364.2 L782.0 366 L783.5 364.2"/></svg>
<span class="t" style="left:802.10px;top:351px;font-size:8.0px;color:#15171b;transform:scaleX(0.8963);font-weight:bold;">Count unique</span>
<span class="t" style="left:802.10px;top:364px;font-size:8.0px;color:#15171b;transform:scaleX(0.8900);font-weight:bold;">users</span>
<svg class="abs" style="left:0;top:0" width="1200" height="727" fill="none" stroke="#5f646c" stroke-width=".85" stroke-linecap="round" stroke-linejoin="round"><path d="M856.2 362.2 V356.2 M854.7 357.8 L856.2 356 L857.7 357.8 M859.9 359.8 V365.8 M858.4 364.2 L859.9 366 L861.4 364.2"/></svg>
<span class="t" style="left:879.60px;top:351px;font-size:8.0px;color:#15171b;transform:scaleX(0.9056);font-weight:bold;">Unique views</span>
<span class="t" style="left:879.60px;top:364px;font-size:8.0px;color:#15171b;transform:scaleX(0.8948);font-weight:bold;">by session</span>
<svg class="abs" style="left:0;top:0" width="1200" height="727" fill="none" stroke="#5f646c" stroke-width=".85" stroke-linecap="round" stroke-linejoin="round"><path d="M933.6 362.2 V356.2 M932.1 357.8 L933.6 356 L935.1 357.8 M937.3 359.8 V365.8 M935.8 364.2 L937.3 366 L938.8 364.2"/></svg>
<span class="t" style="left:957.40px;top:351px;font-size:8.0px;color:#15171b;transform:scaleX(0.8953);font-weight:bold;">Conversion</span>
<span class="t" style="left:957.40px;top:364px;font-size:8.0px;color:#15171b;transform:scaleX(0.9112);font-weight:bold;">Rate</span>
<svg class="abs" style="left:0;top:0" width="1200" height="727" fill="none" stroke="#5f646c" stroke-width=".85" stroke-linecap="round" stroke-linejoin="round"><path d="M1011.5 362.2 V356.2 M1010.0 357.8 L1011.5 356 L1013.0 357.8 M1015.2 359.8 V365.8 M1013.7 364.2 L1015.2 366 L1016.7 364.2"/></svg>
<div class="sep" style="top:385.9px"></div>
<div class="sep" style="top:437.8px"></div>
<div class="sep" style="top:489.6px"></div>
<div class="sep" style="top:541.3px"></div>
<div class="sep" style="top:592.9px"></div>
<div class="sep" style="top:644.8px"></div>
<span class="t" style="left:180.70px;top:403px;font-size:9.5px;color:#1763bd;transform:scaleX(0.9086);font-weight:bold;">I Spent 2000 Hours Learning How To Learn: P...</span>
<span class="t" style="left:180.70px;top:416px;font-size:8.3px;color:#33363b;transform:scaleX(0.9591);-webkit-text-stroke:.18px #33363b;">https://novena.pro/novosti/propal-rezhim-modem%20...</span>
<div class="abs" style="left:392.9px;top:403.7px;width:83px;height:18px;border-radius:2.5px;background:#1a73de"></div>
<span class="t" style="left:398.40px;top:409px;font-size:9.7px;color:#fff;transform:scaleX(0.9093);-webkit-text-stroke:.18px #fff;">Show on page</span>
<svg class="abs" style="left:0;top:0" width="1200" height="727" fill="none" stroke="#fff" stroke-width="1" stroke-linecap="round" stroke-linejoin="round"><path d="M463.2 409.5 H461.6 Q460.4 409.5 460.4 410.7 V415.5 Q460.4 416.7 461.6 416.7 H466.6 Q467.8 416.7 467.8 415.5 V414.1 M465.2 408.5 H468.8 V412.1 M468.8 408.5 L464.0 413.3"/></svg>
<span class="t" style="left:491.50px;top:409px;font-size:9.7px;color:#15171b;letter-spacing:0.023px;-webkit-text-stroke:.18px #15171b;">90/0/10</span>
<span class="t" style="left:569.40px;top:409px;font-size:9.7px;color:#15171b;transform:scaleX(0.9269);-webkit-text-stroke:.18px #15171b;">1337.40</span>
<span class="t" style="left:646.80px;top:409px;font-size:9.7px;color:#15171b;transform:scaleX(0.8990);-webkit-text-stroke:.18px #15171b;">16</span>
<span class="t" style="left:724.60px;top:409px;font-size:9.7px;color:#15171b;transform:scaleX(0.8805);-webkit-text-stroke:.18px #15171b;">16</span>
<span class="t" style="left:802.20px;top:409px;font-size:9.7px;color:#15171b;transform:scaleX(0.9083);-webkit-text-stroke:.18px #15171b;">21</span>
<span class="t" style="left:880.00px;top:409px;font-size:9.7px;color:#15171b;transform:scaleX(0.8990);-webkit-text-stroke:.18px #15171b;">18</span>
<span class="t" style="left:957.60px;top:409px;font-size:9.7px;color:#15171b;transform:scaleX(0.8789);-webkit-text-stroke:.18px #15171b;">2.9 %</span>
<span class="t" style="left:180.70px;top:455px;font-size:9.5px;color:#1763bd;transform:scaleX(0.9086);font-weight:bold;">I Spent 2000 Hours Learning How To Learn: P...</span>
<span class="t" style="left:180.70px;top:468px;font-size:8.3px;color:#33363b;transform:scaleX(0.9591);-webkit-text-stroke:.18px #33363b;">https://novena.pro/novosti/propal-rezhim-modem%20...</span>
<div class="abs" style="left:392.9px;top:455.6px;width:83px;height:18px;border-radius:2.5px;background:#1a73de"></div>
<span class="t" style="left:398.40px;top:461px;font-size:9.7px;color:#fff;transform:scaleX(0.9093);-webkit-text-stroke:.18px #fff;">Show on page</span>
<svg class="abs" style="left:0;top:0" width="1200" height="727" fill="none" stroke="#fff" stroke-width="1" stroke-linecap="round" stroke-linejoin="round"><path d="M463.2 461.4 H461.6 Q460.4 461.4 460.4 462.6 V467.4 Q460.4 468.6 461.6 468.6 H466.6 Q467.8 468.6 467.8 467.4 V466.0 M465.2 460.4 H468.8 V464.0 M468.8 460.4 L464.0 465.2"/></svg>
<span class="t" style="left:491.50px;top:461px;font-size:9.7px;color:#15171b;letter-spacing:0.023px;-webkit-text-stroke:.18px #15171b;">90/0/10</span>
<span class="t" style="left:569.40px;top:461px;font-size:9.7px;color:#15171b;transform:scaleX(0.9269);-webkit-text-stroke:.18px #15171b;">1337.40</span>
<span class="t" style="left:646.80px;top:461px;font-size:9.7px;color:#15171b;transform:scaleX(0.8990);-webkit-text-stroke:.18px #15171b;">16</span>
<span class="t" style="left:724.60px;top:461px;font-size:9.7px;color:#15171b;transform:scaleX(0.8805);-webkit-text-stroke:.18px #15171b;">16</span>
<span class="t" style="left:802.20px;top:461px;font-size:9.7px;color:#15171b;transform:scaleX(0.9083);-webkit-text-stroke:.18px #15171b;">21</span>
<span class="t" style="left:880.00px;top:461px;font-size:9.7px;color:#15171b;transform:scaleX(0.8990);-webkit-text-stroke:.18px #15171b;">18</span>
<span class="t" style="left:957.60px;top:461px;font-size:9.7px;color:#15171b;transform:scaleX(0.8789);-webkit-text-stroke:.18px #15171b;">0.1 %</span>
<span class="t" style="left:180.70px;top:507px;font-size:9.5px;color:#1763bd;transform:scaleX(0.9086);font-weight:bold;">I Spent 2000 Hours Learning How To Learn: P...</span>
<span class="t" style="left:180.70px;top:520px;font-size:8.3px;color:#33363b;transform:scaleX(0.9591);-webkit-text-stroke:.18px #33363b;">https://novena.pro/novosti/propal-rezhim-modem%20...</span>
<div class="abs" style="left:392.9px;top:507.4px;width:83px;height:18px;border-radius:2.5px;background:#1a73de"></div>
<span class="t" style="left:398.40px;top:513px;font-size:9.7px;color:#fff;transform:scaleX(0.9093);-webkit-text-stroke:.18px #fff;">Show on page</span>
<svg class="abs" style="left:0;top:0" width="1200" height="727" fill="none" stroke="#fff" stroke-width="1" stroke-linecap="round" stroke-linejoin="round"><path d="M463.2 513.2 H461.6 Q460.4 513.2 460.4 514.4 V519.2 Q460.4 520.4 461.6 520.4 H466.6 Q467.8 520.4 467.8 519.2 V517.8 M465.2 512.2 H468.8 V515.8 M468.8 512.2 L464.0 517.0"/></svg>
<span class="t" style="left:491.50px;top:513px;font-size:9.7px;color:#15171b;letter-spacing:0.023px;-webkit-text-stroke:.18px #15171b;">90/0/10</span>
<span class="t" style="left:569.40px;top:513px;font-size:9.7px;color:#15171b;transform:scaleX(0.9269);-webkit-text-stroke:.18px #15171b;">1337.40</span>
<span class="t" style="left:646.80px;top:513px;font-size:9.7px;color:#15171b;transform:scaleX(0.8990);-webkit-text-stroke:.18px #15171b;">16</span>
<span class="t" style="left:724.60px;top:513px;font-size:9.7px;color:#15171b;transform:scaleX(0.8805);-webkit-text-stroke:.18px #15171b;">16</span>
<span class="t" style="left:802.20px;top:513px;font-size:9.7px;color:#15171b;transform:scaleX(0.9083);-webkit-text-stroke:.18px #15171b;">21</span>
<span class="t" style="left:880.00px;top:513px;font-size:9.7px;color:#15171b;transform:scaleX(0.8990);-webkit-text-stroke:.18px #15171b;">18</span>
<span class="t" style="left:957.60px;top:513px;font-size:9.7px;color:#15171b;transform:scaleX(0.8789);-webkit-text-stroke:.18px #15171b;">2.8 %</span>
<span class="t" style="left:180.70px;top:558px;font-size:9.5px;color:#1763bd;transform:scaleX(0.9086);font-weight:bold;">I Spent 2000 Hours Learning How To Learn: P...</span>
<span class="t" style="left:180.70px;top:572px;font-size:8.3px;color:#33363b;transform:scaleX(0.9591);-webkit-text-stroke:.18px #33363b;">https://novena.pro/novosti/propal-rezhim-modem%20...</span>
<div class="abs" style="left:392.9px;top:559.1px;width:83px;height:18px;border-radius:2.5px;background:#1a73de"></div>
<span class="t" style="left:398.40px;top:565px;font-size:9.7px;color:#fff;transform:scaleX(0.9093);-webkit-text-stroke:.18px #fff;">Show on page</span>
<svg class="abs" style="left:0;top:0" width="1200" height="727" fill="none" stroke="#fff" stroke-width="1" stroke-linecap="round" stroke-linejoin="round"><path d="M463.2 564.9 H461.6 Q460.4 564.9 460.4 566.1 V570.9 Q460.4 572.1 461.6 572.1 H466.6 Q467.8 572.1 467.8 570.9 V569.5 M465.2 563.9 H468.8 V567.5 M468.8 563.9 L464.0 568.7"/></svg>
<span class="t" style="left:491.50px;top:565px;font-size:9.7px;color:#15171b;letter-spacing:0.023px;-webkit-text-stroke:.18px #15171b;">90/0/10</span>
<span class="t" style="left:569.40px;top:565px;font-size:9.7px;color:#15171b;transform:scaleX(0.9269);-webkit-text-stroke:.18px #15171b;">1337.40</span>
<span class="t" style="left:646.80px;top:565px;font-size:9.7px;color:#15171b;transform:scaleX(0.8990);-webkit-text-stroke:.18px #15171b;">16</span>
<span class="t" style="left:724.60px;top:565px;font-size:9.7px;color:#15171b;transform:scaleX(0.8805);-webkit-text-stroke:.18px #15171b;">16</span>
<span class="t" style="left:802.20px;top:565px;font-size:9.7px;color:#15171b;transform:scaleX(0.9083);-webkit-text-stroke:.18px #15171b;">21</span>
<span class="t" style="left:880.00px;top:565px;font-size:9.7px;color:#15171b;transform:scaleX(0.8990);-webkit-text-stroke:.18px #15171b;">18</span>
<span class="t" style="left:180.70px;top:610px;font-size:9.5px;color:#1763bd;transform:scaleX(0.9086);font-weight:bold;">I Spent 2000 Hours Learning How To Learn: P...</span>
<span class="t" style="left:180.70px;top:623px;font-size:8.3px;color:#33363b;transform:scaleX(0.9591);-webkit-text-stroke:.18px #33363b;">https://novena.pro/novosti/propal-rezhim-modem%20...</span>
<div class="abs" style="left:392.9px;top:610.7px;width:83px;height:18px;border-radius:2.5px;background:#1a73de"></div>
<span class="t" style="left:398.40px;top:616px;font-size:9.7px;color:#fff;transform:scaleX(0.9093);-webkit-text-stroke:.18px #fff;">Show on page</span>
<svg class="abs" style="left:0;top:0" width="1200" height="727" fill="none" stroke="#fff" stroke-width="1" stroke-linecap="round" stroke-linejoin="round"><path d="M463.2 616.5 H461.6 Q460.4 616.5 460.4 617.7 V622.5 Q460.4 623.7 461.6 623.7 H466.6 Q467.8 623.7 467.8 622.5 V621.1 M465.2 615.5 H468.8 V619.1 M468.8 615.5 L464.0 620.3"/></svg>
<span class="t" style="left:491.50px;top:616px;font-size:9.7px;color:#15171b;letter-spacing:0.023px;-webkit-text-stroke:.18px #15171b;">90/0/10</span>
<span class="t" style="left:569.40px;top:616px;font-size:9.7px;color:#15171b;transform:scaleX(0.9269);-webkit-text-stroke:.18px #15171b;">1337.40</span>
<span class="t" style="left:646.80px;top:616px;font-size:9.7px;color:#15171b;transform:scaleX(0.8990);-webkit-text-stroke:.18px #15171b;">16</span>
<span class="t" style="left:724.60px;top:616px;font-size:9.7px;color:#15171b;transform:scaleX(0.8805);-webkit-text-stroke:.18px #15171b;">16</span>
<span class="t" style="left:802.20px;top:616px;font-size:9.7px;color:#15171b;transform:scaleX(0.9083);-webkit-text-stroke:.18px #15171b;">21</span>
<span class="t" style="left:880.00px;top:616px;font-size:9.7px;color:#15171b;transform:scaleX(0.8990);-webkit-text-stroke:.18px #15171b;">18</span>
<span class="t" style="left:180.70px;top:662px;font-size:9.5px;color:#1763bd;transform:scaleX(0.9086);font-weight:bold;">I Spent 2000 Hours Learning How To Learn: P...</span>
<span class="t" style="left:180.70px;top:675px;font-size:8.3px;color:#33363b;transform:scaleX(0.9591);-webkit-text-stroke:.18px #33363b;">https://novena.pro/novosti/propal-rezhim-modem%20...</span>
<div class="abs" style="left:392.9px;top:662.6px;width:83px;height:18px;border-radius:2.5px;background:#1a73de"></div>
<span class="t" style="left:398.40px;top:668px;font-size:9.7px;color:#fff;transform:scaleX(0.9093);-webkit-text-stroke:.18px #fff;">Show on page</span>
<svg class="abs" style="left:0;top:0" width="1200" height="727" fill="none" stroke="#fff" stroke-width="1" stroke-linecap="round" stroke-linejoin="round"><path d="M463.2 668.4 H461.6 Q460.4 668.4 460.4 669.6 V674.4 Q460.4 675.6 461.6 675.6 H466.6 Q467.8 675.6 467.8 674.4 V673.0 M465.2 667.4 H468.8 V671.0 M468.8 667.4 L464.0 672.2"/></svg>
<span class="t" style="left:491.50px;top:668px;font-size:9.7px;color:#15171b;letter-spacing:0.023px;-webkit-text-stroke:.18px #15171b;">90/0/10</span>
<span class="t" style="left:569.40px;top:668px;font-size:9.7px;color:#15171b;transform:scaleX(0.9269);-webkit-text-stroke:.18px #15171b;">1337.40</span>
<span class="t" style="left:646.80px;top:668px;font-size:9.7px;color:#15171b;transform:scaleX(0.8990);-webkit-text-stroke:.18px #15171b;">16</span>
<span class="t" style="left:724.60px;top:668px;font-size:9.7px;color:#15171b;transform:scaleX(0.8805);-webkit-text-stroke:.18px #15171b;">16</span>
<span class="t" style="left:802.20px;top:668px;font-size:9.7px;color:#15171b;transform:scaleX(0.9083);-webkit-text-stroke:.18px #15171b;">21</span>
<span class="t" style="left:880.00px;top:668px;font-size:9.7px;color:#15171b;transform:scaleX(0.8990);-webkit-text-stroke:.18px #15171b;">18</span>
</div></div>
<div id="sales"></div><span class="t" style="left:60.20px;top:408px;font-size:40.1px;color:#fff;transform:scaleX(0.9835);-webkit-text-stroke:.9px #fff;">+$22,543</span><span class="t" style="left:61.20px;top:458px;font-size:28.8px;color:#fff;transform:scaleX(0.9618);-webkit-text-stroke:.3px #fff;">Total Sales</span>
<svg class="abs" style="left:0;top:0" width="1200" height="727"><path d="M828.3 448.8 C829.6 448.8 832.7 449.1 836.0 449.0 C839.3 448.9 844.2 448.3 848.0 448.0 C851.8 447.7 857.2 447.4 859.0 447.3 C859.5 446.3 861.0 443.4 862.0 441.5 C863.0 439.6 863.8 438.2 865.0 436.0 C866.2 433.8 868.0 430.5 869.5 428.0 C871.0 425.5 872.5 423.2 874.0 421.0 C875.5 418.8 877.0 416.5 878.5 414.5 C880.0 412.5 881.5 410.8 883.0 409.0 C884.5 407.2 886.0 405.5 887.5 404.0 C889.0 402.5 890.5 401.2 892.0 400.0 C893.5 398.8 895.0 397.8 896.5 397.0 C898.0 396.2 899.9 395.4 901.0 395.2 C902.1 395.0 902.6 395.4 903.2 395.8 C903.8 396.2 904.3 396.9 904.8 397.8 C905.3 398.8 905.9 400.1 906.4 401.5 C906.9 402.9 907.3 404.2 907.8 406.0 C908.3 407.8 908.8 410.0 909.3 412.0 C909.8 414.0 910.3 415.8 910.8 418.0 C911.3 420.2 911.7 423.0 912.1 425.5 C912.5 428.0 912.9 430.5 913.3 433.0 C913.7 435.5 914.0 438.0 914.3 440.5 C914.6 443.0 914.9 445.5 915.3 448.0 C915.6 450.5 916.0 453.0 916.4 455.5 C916.8 458.0 916.9 460.8 917.5 463.0 C918.1 465.2 919.2 467.0 920.0 469.0 C920.8 471.0 921.3 472.5 922.0 475.0 C922.7 477.5 923.6 481.0 924.0 484.0 C924.4 487.0 924.6 490.2 924.6 493.0 C924.6 495.8 924.5 498.5 924.2 501.0 C923.9 503.5 923.4 505.7 922.8 508.0 C922.2 510.3 921.6 512.8 920.7 515.0 C919.9 517.2 918.9 519.3 917.7 521.5 C916.5 523.7 915.1 525.8 913.5 528.0 C911.9 530.2 908.9 533.4 908.0 534.5 C910.0 534.0 916.0 532.3 920.0 531.5 C924.0 530.7 928.0 530.1 932.0 529.5 C936.0 528.9 940.0 528.4 944.0 528.0 C948.0 527.6 952.0 527.4 956.0 527.4 C960.0 527.4 964.0 527.6 968.0 528.0 C972.0 528.4 976.3 528.8 980.0 529.5 C983.7 530.2 987.0 531.0 990.0 532.0 C993.0 533.0 995.5 534.3 998.0 535.5 C1000.5 536.7 1003.0 537.9 1005.0 539.0 C1007.0 540.1 1008.2 540.7 1010.0 542.4 C1011.8 544.1 1014.6 547.9 1015.5 549.0 C1016.4 548.4 1019.1 546.8 1021.0 545.5 C1022.9 544.2 1025.0 542.7 1026.8 541.1 C1028.5 539.5 1030.1 537.7 1031.5 536.0 C1032.9 534.3 1034.0 532.7 1035.1 530.8 C1036.2 528.9 1037.2 526.6 1038.0 524.5 C1038.8 522.4 1039.6 521.0 1040.2 518.4 C1040.8 515.8 1041.2 512.1 1041.6 509.0 C1042.0 505.9 1042.2 503.0 1042.7 499.9 C1043.2 496.8 1043.7 493.6 1044.3 490.5 C1044.9 487.4 1045.6 484.1 1046.4 481.3 C1047.2 478.5 1048.0 475.9 1049.0 473.5 C1050.0 471.1 1051.3 468.8 1052.6 466.8 C1053.9 464.8 1055.5 463.1 1057.0 461.5 C1058.5 459.9 1060.4 458.5 1061.9 457.5 C1063.4 456.5 1064.6 455.9 1066.0 455.3 C1067.4 454.7 1068.5 454.4 1070.2 454.0 C1071.9 453.6 1074.3 452.8 1076.4 452.9 C1078.5 453.0 1080.8 453.8 1082.6 454.4 C1084.4 455.0 1085.6 455.6 1087.0 456.5 C1088.4 457.4 1089.7 458.6 1090.8 459.6 C1091.9 460.6 1092.8 461.6 1093.5 462.6 C1094.2 463.6 1094.7 464.7 1095.0 465.8 C1095.3 466.9 1095.6 467.7 1095.5 469.0 C1095.4 470.3 1095.2 471.8 1094.6 473.5 C1094.0 475.2 1092.8 477.7 1091.8 479.2 C1090.8 480.7 1089.7 481.5 1088.5 482.5 C1087.3 483.5 1086.0 484.3 1084.6 485.4 C1083.2 486.4 1081.7 487.6 1080.3 488.8 C1078.9 490.0 1077.5 491.1 1076.4 492.6 C1075.3 494.1 1074.4 496.1 1073.5 498.0 C1072.6 499.9 1072.0 501.7 1071.2 504.0 C1070.5 506.3 1069.7 509.2 1069.0 512.0 C1068.3 514.8 1067.8 517.7 1067.1 520.5 C1066.4 523.3 1065.6 526.2 1064.7 529.0 C1063.8 531.8 1063.0 534.4 1061.9 537.0 C1060.8 539.6 1059.6 542.1 1058.2 544.5 C1056.8 546.9 1055.4 549.2 1053.7 551.5 C1052.0 553.8 1050.1 556.0 1048.0 558.0 C1045.9 560.0 1043.5 562.0 1041.3 563.8 C1039.0 565.5 1036.9 567.1 1034.5 568.5 C1032.1 569.9 1028.1 571.5 1026.8 572.1 C1027.1 573.4 1027.8 577.0 1028.5 580.0 C1029.2 583.0 1030.2 586.7 1031.0 590.0 C1031.8 593.3 1032.7 596.9 1033.5 600.0 C1034.3 603.1 1034.7 603.9 1035.7 608.7 C1036.7 613.5 1038.1 622.4 1039.3 628.9 C1040.5 635.4 1041.8 641.7 1042.9 647.7 C1044.0 653.7 1045.0 659.5 1045.8 665.0 C1046.6 670.5 1047.3 676.8 1047.5 680.9 C1047.7 685.0 1047.7 687.0 1047.2 689.6 C1046.7 692.2 1045.9 694.9 1044.3 696.8 C1042.7 698.7 1040.8 700.2 1037.8 701.2 C1034.8 702.2 1030.1 702.8 1026.3 702.9 C1022.4 703.0 1018.0 702.7 1014.7 701.9 C1011.5 701.1 1008.6 699.8 1006.8 698.3 C1005.0 696.8 1004.3 694.8 1003.9 693.2 C1003.5 691.6 1003.9 690.4 1004.6 688.9 C1005.3 687.4 1006.8 685.8 1008.2 684.5 C1009.7 683.2 1012.1 682.2 1013.3 680.9 C1014.5 679.6 1015.2 678.5 1015.4 676.6 C1015.6 674.7 1015.3 672.0 1014.7 669.4 C1014.1 666.8 1013.0 663.4 1011.8 660.7 C1010.6 658.0 1008.2 654.3 1007.5 653.0 C1005.9 652.1 1001.1 649.4 998.0 647.4 C994.9 645.4 990.5 641.9 989.0 640.8 C988.5 641.9 987.0 644.4 985.8 647.7 C984.5 651.0 983.0 656.1 981.5 660.7 C980.0 665.3 978.4 670.8 977.1 675.1 C975.8 679.4 974.8 683.6 973.5 686.7 C972.2 689.8 971.0 692.0 969.2 693.9 C967.4 695.8 965.5 697.3 962.7 698.3 C959.9 699.3 956.0 699.8 952.6 700.0 C949.2 700.2 945.4 700.0 942.5 699.4 C939.6 698.8 936.9 697.5 935.2 696.1 C933.5 694.7 932.5 692.8 932.3 691.0 C932.1 689.2 932.7 687.1 933.8 685.3 C934.9 683.5 936.8 681.5 938.8 680.2 C940.8 678.9 944.2 678.6 946.1 677.3 C948.0 676.0 949.4 674.6 950.4 672.3 C951.4 670.0 951.8 666.7 951.9 663.6 C952.0 660.5 952.1 656.9 951.1 653.5 C950.1 650.1 947.9 646.6 946.1 643.4 C944.3 640.1 941.3 635.6 940.3 634.0 C938.6 633.9 933.4 633.6 930.0 633.4 C926.6 633.2 923.2 633.0 920.0 632.8 C916.8 632.6 912.3 632.5 910.8 632.4 C910.5 634.0 910.0 638.1 909.3 641.9 C908.6 645.6 907.6 650.3 906.5 654.9 C905.4 659.5 904.0 665.1 902.8 669.4 C901.6 673.7 900.4 677.5 899.2 680.9 C898.0 684.3 896.9 687.3 895.6 689.6 C894.3 691.9 893.2 693.3 891.3 694.7 C889.4 696.1 886.9 697.3 884.0 698.0 C881.1 698.7 877.3 699.1 873.9 699.0 C870.5 698.9 866.6 698.4 863.8 697.5 C861.0 696.6 858.8 695.4 857.3 693.9 C855.8 692.4 855.2 690.1 854.9 688.2 C854.6 686.3 854.6 684.3 855.4 682.4 C856.2 680.5 857.9 678.0 859.5 676.6 C861.1 675.2 864.0 674.9 865.3 673.7 C866.6 672.5 866.7 672.0 867.4 669.4 C868.1 666.8 869.1 662.1 869.6 657.8 C870.1 653.5 870.3 648.1 870.3 643.4 C870.3 638.7 869.7 631.7 869.6 629.4 C868.3 629.0 864.5 628.0 862.0 627.2 C859.5 626.4 855.7 625.0 854.4 624.6 C854.0 625.8 853.4 628.4 852.3 631.8 C851.2 635.2 849.3 640.5 847.9 644.8 C846.5 649.1 845.0 653.5 843.6 657.8 C842.2 662.1 840.7 667.1 839.2 670.8 C837.8 674.5 836.5 677.6 834.9 680.2 C833.3 682.9 831.8 684.9 829.9 686.7 C828.0 688.5 826.2 690.0 823.4 691.0 C820.6 692.0 816.6 692.6 813.2 692.9 C809.8 693.1 805.9 692.9 803.1 692.5 C800.3 692.1 798.3 691.3 796.6 690.3 C794.9 689.3 793.8 688.2 793.0 686.7 C792.2 685.2 791.6 683.2 791.6 681.6 C791.6 680.0 792.0 678.8 793.0 677.3 C794.0 675.8 795.5 673.7 797.3 672.3 C799.1 670.9 801.9 670.5 803.8 669.1 C805.7 667.7 807.6 665.7 808.9 663.6 C810.2 661.5 810.7 659.3 811.5 656.4 C812.3 653.5 812.9 649.3 813.5 646.2 C814.1 643.1 814.7 640.5 815.1 637.6 C815.5 634.7 815.8 633.5 816.1 628.9 C816.4 624.3 816.8 615.2 816.8 610.0 C816.8 604.8 816.6 601.5 816.4 597.5 C816.2 593.5 815.9 589.8 815.6 585.9 C815.3 582.0 814.9 578.2 814.6 574.4 C814.3 570.5 814.1 566.2 813.8 562.8 C813.5 559.4 813.2 556.0 812.7 554.1 C812.2 552.2 811.0 551.9 810.6 551.5 C808.7 550.7 802.6 548.9 799.0 546.9 C795.4 544.9 792.0 542.6 788.9 539.7 C785.8 536.8 782.6 533.0 780.2 529.6 C777.8 526.2 775.9 522.9 774.5 519.5 C773.1 516.1 772.3 512.7 771.6 509.3 C770.9 505.9 770.4 502.2 770.3 499.0 C770.2 495.8 770.5 493.0 771.0 490.0 C771.5 487.0 772.3 483.7 773.0 481.0 C773.7 478.3 774.6 476.2 775.3 474.0 C776.0 471.8 776.7 470.6 777.3 467.5 C777.9 464.4 778.2 460.0 778.8 455.5 C779.4 451.0 780.1 445.5 781.0 440.5 C781.9 435.5 782.8 430.5 784.0 425.5 C785.2 420.5 787.2 414.2 788.5 410.5 C789.8 406.8 791.0 404.8 792.0 403.0 C793.0 401.2 793.7 400.4 794.5 399.6 C795.3 398.8 796.0 398.3 796.8 398.2 C797.5 398.1 798.2 398.4 799.0 398.8 C799.8 399.2 800.3 399.5 801.3 400.8 C802.3 402.1 803.6 404.4 805.0 406.5 C806.4 408.6 808.0 411.0 809.5 413.5 C811.0 416.0 812.5 418.8 814.0 421.5 C815.5 424.2 817.2 427.7 818.5 430.0 C819.8 432.3 820.5 433.8 821.5 435.5 C822.5 437.2 823.4 438.3 824.5 440.5 C825.6 442.7 827.7 447.4 828.3 448.8 Z" fill="#6c9bf8"/><path d="M799.3 430.2 Q806.4 439.6 811.2 450 L789.8 460.2 Q792.4 444 799.3 430.2 Z" fill="#15242e" stroke="#15242e" stroke-width="3" stroke-linejoin="round"/><path d="M896.4 425.8 Q901 442 902.2 459.8 L878.2 447.9 Q886 435.6 896.4 425.8 Z" fill="#15242e" stroke="#15242e" stroke-width="3" stroke-linejoin="round"/><g fill="none" stroke="#15242e" stroke-width="3.3" stroke-linecap="round" stroke-linejoin="round"><path d="M800.5 495 Q800.8 486.4 807.5 486 Q813.8 486.2 814.2 494"/><path d="M849.9 493.8 Q850.4 486 857.3 485.7 Q864.2 486 864.6 494.3"/><path d="M832.7 505 L833.2 515.4 M812.8 512.4 Q814 519.8 822 519.7 Q830.6 519.4 833.2 514.8 Q836 519.6 844.4 519.7 Q852.6 519.6 854 511.6" stroke-width="3.4"/></g><path d="M825.6 495.2 H839.4 Q842 495.4 841 498.2 Q839 504.4 834.6 508.2 L832.8 509.8 L830.8 508.2 Q826 504.4 824 498.2 Q823.2 495.4 825.6 495.2 Z" fill="#15242e"/><g fill="none" stroke="#15242e" stroke-width="2.3" stroke-linecap="round"><path d="M748.8 504.8 Q765 504.4 781.6 506.6 M752.4 522.2 Q766 517.6 781.4 515.6 M883.8 499.6 Q897 493.6 911.2 490 M884.4 508 Q898 507 911.2 508.8"/></g><g fill="none" stroke="#15242e" stroke-width="2.1" stroke-linecap="round"><path d="M805.3 677.5 Q800.4 684.6 803.1 691.2 M816.1 678 Q812 685 815.4 691.4"/><path d="M865.3 684 Q861 690.6 863.8 696.4 M878.3 684 Q873.6 690.8 877 697.2"/><path d="M943.9 685.6 Q938 691.6 941.7 696.8 M955.9 685.6 Q950.6 692.4 954.3 698.2"/><path d="M1017.3 688.4 Q1011.8 693.8 1015.4 700.2 M1028.9 688.6 Q1024.4 694.6 1028.4 701"/><path d="M844.3 617.1 Q855.1 625.2 868.9 628.9" stroke-width="2.7"/><path d="M967 610.8 Q969 624.4 977.1 630.4 Q990.1 642.2 1007.5 652.3 M940.3 634 Q958.4 633 977.1 630.4" stroke-width="2.4"/></g></svg>
</div>
</body>
</html>
